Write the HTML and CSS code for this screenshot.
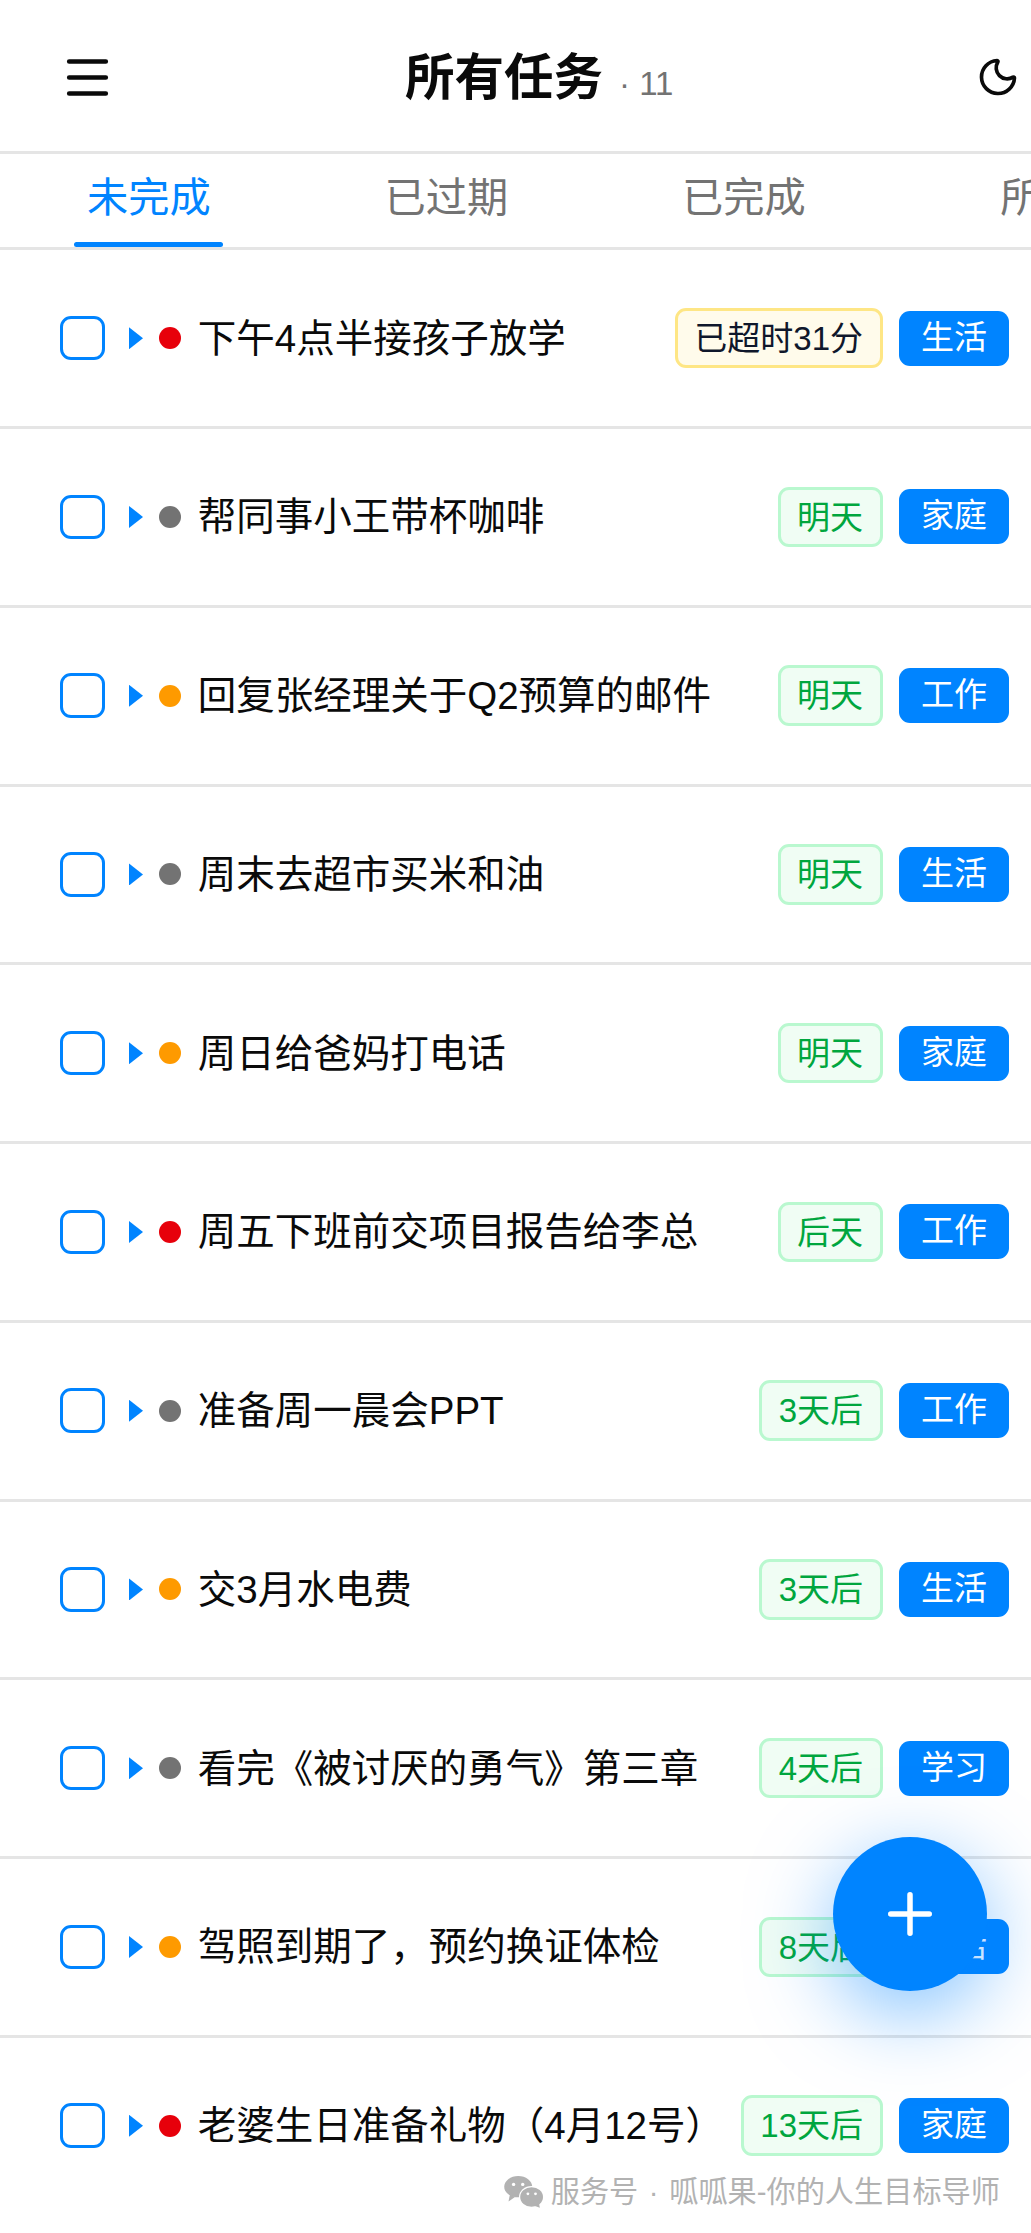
FILE: index.html
```html
<!DOCTYPE html>
<html lang="zh-CN">
<head>
    <meta charset="utf-8">
    <title>所有任务</title>
    <link rel="stylesheet" href="styles.css">
</head>
<body>
    <div class="header">
        <svg class="icon-menu" viewBox="0 0 24 24"><path d="M4 5h16M4 12h16M4 19h16"/></svg>
        <div class="header-title">
            <h1>所有任务</h1>
            <span class="task-count">· 11</span>
        </div>
        <svg class="icon-moon" viewBox="0 0 24 24"><path d="M20.985 12.486a9 9 0 1 1-9.473-9.472c.405-.022.617.46.402.803a6 6 0 0 0 8.268 8.268c.344-.215.825-.004.803.401"/></svg>
    </div>

    <div class="tabs">
        <div class="tab active">未完成</div>
        <div class="tab">已过期</div>
        <div class="tab">已完成</div>
        <div class="tab">所有</div>
    </div>

    <div class="task-list">
        <div class="task">
            <span class="checkbox"></span><span class="arrow"></span><span class="dot dot-red"></span>
            <span class="task-name">下午4点半接孩子放学</span>
            <span class="due due-late">已超时31分</span><span class="tag">生活</span>
        </div>
        <div class="task">
            <span class="checkbox"></span><span class="arrow"></span><span class="dot"></span>
            <span class="task-name">帮同事小王带杯咖啡</span>
            <span class="due">明天</span><span class="tag">家庭</span>
        </div>
        <div class="task">
            <span class="checkbox"></span><span class="arrow"></span><span class="dot dot-orange"></span>
            <span class="task-name">回复张经理关于Q2预算的邮件</span>
            <span class="due">明天</span><span class="tag">工作</span>
        </div>
        <div class="task">
            <span class="checkbox"></span><span class="arrow"></span><span class="dot"></span>
            <span class="task-name">周末去超市买米和油</span>
            <span class="due">明天</span><span class="tag">生活</span>
        </div>
        <div class="task">
            <span class="checkbox"></span><span class="arrow"></span><span class="dot dot-orange"></span>
            <span class="task-name">周日给爸妈打电话</span>
            <span class="due">明天</span><span class="tag">家庭</span>
        </div>
        <div class="task">
            <span class="checkbox"></span><span class="arrow"></span><span class="dot dot-red"></span>
            <span class="task-name">周五下班前交项目报告给李总</span>
            <span class="due">后天</span><span class="tag">工作</span>
        </div>
        <div class="task">
            <span class="checkbox"></span><span class="arrow"></span><span class="dot"></span>
            <span class="task-name">准备周一晨会PPT</span>
            <span class="due">3天后</span><span class="tag">工作</span>
        </div>
        <div class="task">
            <span class="checkbox"></span><span class="arrow"></span><span class="dot dot-orange"></span>
            <span class="task-name">交3月水电费</span>
            <span class="due">3天后</span><span class="tag">生活</span>
        </div>
        <div class="task">
            <span class="checkbox"></span><span class="arrow"></span><span class="dot"></span>
            <span class="task-name">看完《被讨厌的勇气》第三章</span>
            <span class="due">4天后</span><span class="tag">学习</span>
        </div>
        <div class="task">
            <span class="checkbox"></span><span class="arrow"></span><span class="dot dot-orange"></span>
            <span class="task-name">驾照到期了，预约换证体检</span>
            <span class="due">8天后</span><span class="tag">生活</span>
        </div>
        <div class="task">
            <span class="checkbox"></span><span class="arrow"></span><span class="dot dot-red"></span>
            <span class="task-name">老婆生日准备礼物（4月12号）</span>
            <span class="due">13天后</span><span class="tag">家庭</span>
        </div>
    </div>

    <div class="fab">
        <svg viewBox="0 0 24 24"><path d="M5 12h14M12 5v14"/></svg>
    </div>

    <div class="watermark">
        <svg viewBox="0 0 40 32">
            <ellipse cx="14.2" cy="10.700" rx="14" ry="10.600"/>
            <path d="M6 18l-1.500 7.500 6.500-4.500z"/>
            <ellipse cx="27.600" cy="21" rx="12.600" ry="11" fill="#fff"/>
            <ellipse cx="27.600" cy="21" rx="11.400" ry="9.800"/>
            <path d="M31 30l4.800 1.800-.8-4.800z"/>
            <g fill="#fff">
                <circle cx="9.600" cy="8.400" r="1.700"/><circle cx="18.700" cy="8.400" r="1.700"/>
                <circle cx="23.900" cy="17.800" r="1.400"/><circle cx="31.500" cy="17.800" r="1.400"/>
            </g>
        </svg>
        <span>服务号 · 呱呱果-你的人生目标导师</span>
    </div>
</body>
</html>
```
FILE: styles.css
```css
* {
    box-sizing: border-box;
}

body {
    position: relative;
    width: 1031px;
    height: 2233px;
    margin: 0;
    overflow: hidden;
    background: #fff;
    color: #0a0a0a;
    font-family: "Liberation Sans", "Noto Sans CJK SC", sans-serif;
}

svg {
    flex-shrink: 0;
    fill: none;
    stroke: currentColor;
    stroke-width: 2;
    stroke-linecap: round;
    stroke-linejoin: round;
}

/* 顶部栏 */
.header {
    display: flex;
    align-items: center;
    justify-content: space-between;
    height: 154px;
    padding: 3px 10.5px 0 60px;
    border-bottom: 3px solid #e5e5e5;
}

.icon-menu {
    width: 55px;
    height: 55px;
}

.icon-moon {
    width: 44px;
    height: 44px;
}

.header-title {
    display: flex;
    align-items: baseline;
    gap: 16px;
    margin-left: -13px;
}

.header-title h1 {
    margin: 0;
    font-size: 49.5px;
    font-weight: 700;
    line-height: 77px;
}

.task-count {
    color: #737373;
    font-size: 33px;
}

/* 标签页 */
.tabs {
    display: flex;
    height: 96.25px;
    overflow: hidden;
    border-bottom: 3px solid #e5e5e5;
}

.tab {
    position: relative;
    flex: 0 0 297.6px;
    color: #737373;
    font-size: 41.25px;
    line-height: 88px;
    text-align: center;
}

.tab.active {
    color: #0084ff;
}

.tab.active::after {
    content: "";
    position: absolute;
    left: 25%;
    bottom: 0;
    width: 50%;
    height: 5.5px;
    border-radius: 3px;
    background: #0084ff;
}

/* 任务列表 */
.task {
    display: flex;
    align-items: center;
    height: 178.75px;
    padding: 0 22px 0 60px;
    border-bottom: 3px solid #e5e5e5;
    white-space: nowrap;
}

.task:last-child {
    border-bottom-color: transparent;
}

.checkbox {
    width: 44.5px;
    height: 44.5px;
    border: 3px solid #0084ff;
    border-radius: 11px;
}

.arrow {
    width: 14px;
    height: 22px;
    margin-left: 24.5px;
    background: #0084ff;
    clip-path: polygon(0 0, 100% 50%, 0 100%);
}

.dot {
    width: 22px;
    height: 22px;
    margin-left: 16.25px;
    border-radius: 50%;
    background: #737373;
}

.dot-red {
    background: #e7000b;
}

.dot-orange {
    background: #fe9a00;
}

.task-name {
    flex: 1;
    margin-left: 16.5px;
    font-size: 38.5px;
    line-height: 55px;
}

.due {
    height: 60.5px;
    padding: 0 16.5px;
    border: 3px solid #b9f8cf;
    border-radius: 11px;
    background: #f0fdf4;
    color: #00a63e;
    font-size: 33px;
    line-height: 55px;
}

.due-late {
    border-color: #fee685;
    background: #fffbeb;
    color: #0f172b;
}

.tag {
    height: 55px;
    margin-left: 16.5px;
    padding: 0 22px;
    border-radius: 11px;
    background: #0084ff;
    color: #fff;
    font-size: 33px;
    line-height: 54px;
}

/* 新增按钮 */
.fab {
    position: absolute;
    right: 44px;
    bottom: 242px;
    display: flex;
    align-items: center;
    justify-content: center;
    width: 154px;
    height: 154px;
    border-radius: 50%;
    background: #0084ff;
    box-shadow: 0 22px 82px rgba(0, 132, 255, 0.5);
    color: #fff;
}

.fab svg {
    width: 66px;
    height: 66px;
}

/* 水印 */
.watermark {
    position: absolute;
    right: 31px;
    bottom: 19px;
    display: flex;
    align-items: center;
    gap: 7px;
    color: #b2b2b2;
    font-size: 29.2px;
    line-height: 44px;
    white-space: nowrap;
    word-spacing: 2.500px;
}

.watermark svg {
    width: 40px;
    height: 32px;
    fill: #b2b2b2;
    stroke: none;
}
```
